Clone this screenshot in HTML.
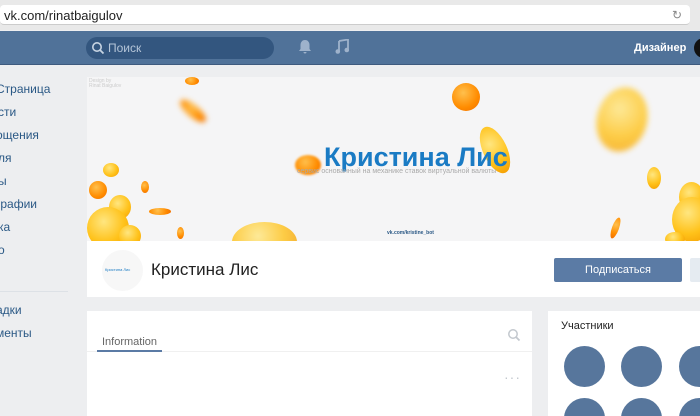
<!DOCTYPE html>
<html style="width:700px;height:416px;overflow:hidden"><head><meta charset="utf-8"><style>
*{margin:0;padding:0;box-sizing:border-box}
body{width:700px;height:416px;overflow:hidden;background:#edeef0;font-family:"Liberation Sans","Noto Sans CJK SC",sans-serif;position:relative}
.a{position:absolute}
.side div{position:absolute;left:-4px;font-size:12px;color:#2a5885}
.coin{position:absolute;border-radius:50%;background:radial-gradient(circle at 40% 35%,#ffe680,#ffc21a 55%,#f39a00)}
.or{background:radial-gradient(circle at 40% 35%,#ffc04d,#ff8c00 60%,#f06d00)}
.bl{filter:blur(3px)}
</style></head><body>
<div class="a" style="left:0;top:0;width:700px;height:30px;background:#e9e9e9"></div>
<div class="a" style="left:0;top:5px;width:690px;height:20px;background:#fff;border-radius:4px;border-bottom:1px solid #ccc"></div>
<div class="a" style="left:4px;top:8px;font-size:13px;color:#222">vk.com/rinatbaigulov</div>
<div class="a" style="left:672px;top:8px;font-size:12px;color:#888">↻</div>
<div class="a" style="left:0;top:31px;width:700px;height:34px;background:#507299;border-bottom:1px solid #3e5a7e"></div>
<div class="a" style="left:86px;top:37px;width:188px;height:22px;background:#33567f;border-radius:11px"></div>
<svg class="a" style="left:91px;top:41px" width="14" height="14"><circle cx="6" cy="6" r="4.2" fill="none" stroke="#c6d3e2" stroke-width="1.6"/><path d="M9 9l3.5 3.5" stroke="#c6d3e2" stroke-width="1.8"/></svg>
<div class="a" style="left:108px;top:41px;font-size:12px;color:#b5c5d8">Поиск</div>
<svg class="a" style="left:298px;top:39px" width="14" height="16"><path d="M7 1c-3 0-4.5 2.5-4.5 5v4L1 12h12l-1.5-2V6C11.5 3.5 10 1 7 1z M5.5 13a1.5 1.5 0 003 0z" fill="#9eb2cb"/></svg>
<svg class="a" style="left:335px;top:39px" width="14" height="16"><path d="M4 2l9-1.5v10" fill="none" stroke="#9eb2cb" stroke-width="1.8"/><path d="M4 2v10" stroke="#9eb2cb" stroke-width="1.8"/><circle cx="2.8" cy="12.5" r="2.3" fill="#9eb2cb"/><circle cx="11.8" cy="11" r="2.3" fill="#9eb2cb"/></svg>
<div class="a" style="left:634px;top:42px;font-size:11px;font-weight:bold;color:#fff">Дизайнер</div>
<div class="a" style="left:694px;top:38px;width:20px;height:20px;border-radius:50%;background:#111"></div>
<div class="side">
<div style="top:82px">Страница</div><div style="top:105px;left:-2px">сти</div><div style="top:128px">ощения</div><div style="top:151px;left:-2px">ля</div><div style="top:174px;left:-2px">ы</div><div style="top:197px">графии</div><div style="top:220px;left:-2px">ка</div><div style="top:243px;left:-2px">о</div>
<div style="top:303px">адки</div><div style="top:326px">менты</div>
</div>
<div class="a" style="left:0;top:291px;width:68px;height:1px;background:#dde1e6"></div>
<div class="a" style="left:87px;top:77px;width:613px;height:220px;background:#fff"></div>
<div class="a" style="left:87px;top:77px;width:613px;height:164px;background:#f5f5f6;overflow:hidden">
<div class="a" style="left:2px;top:2px;font-size:5px;color:#ccc;line-height:5px">Design by<br>Rinat Baigulov</div>
<div class="coin or" style="left:98px;top:0px;width:14px;height:8px"></div>
<div class="coin or bl" style="left:90px;top:28px;width:32px;height:12px;transform:rotate(40deg)"></div>
<div class="coin or" style="left:365px;top:6px;width:28px;height:28px"></div>
<div class="coin bl" style="left:510px;top:10px;width:50px;height:65px;transform:rotate(15deg);opacity:.8"></div>
<div class="coin" style="left:396px;top:48px;width:24px;height:50px;transform:rotate(-25deg)"></div>
<div class="coin or bl" style="left:208px;top:78px;width:26px;height:20px;filter:blur(1px)"></div>
<div class="coin" style="left:16px;top:86px;width:16px;height:14px"></div>
<div class="coin or" style="left:2px;top:104px;width:18px;height:18px"></div>
<div class="coin or" style="left:54px;top:104px;width:8px;height:12px"></div>
<div class="coin" style="left:22px;top:118px;width:22px;height:24px"></div>
<div class="coin or" style="left:62px;top:131px;width:22px;height:7px"></div>
<div class="coin" style="left:0px;top:130px;width:42px;height:42px"></div>
<div class="coin" style="left:32px;top:148px;width:22px;height:22px"></div>
<div class="coin or" style="left:90px;top:150px;width:7px;height:12px"></div>
<div class="coin" style="left:145px;top:145px;width:65px;height:40px;opacity:.8"></div>
<div class="coin" style="left:560px;top:90px;width:14px;height:22px"></div>
<div class="coin" style="left:592px;top:105px;width:25px;height:30px"></div>
<div class="coin" style="left:585px;top:120px;width:40px;height:45px"></div>
<div class="coin or" style="left:525px;top:140px;width:7px;height:22px;transform:rotate(20deg)"></div>
<div class="coin" style="left:578px;top:155px;width:20px;height:14px"></div>
<div class="a" style="left:237px;top:65px;font-size:27px;font-weight:bold;color:#1a7bc4;white-space:nowrap">Кристина Лис</div>
<div class="a" style="left:210px;top:91px;font-size:7px;color:#aaa;white-space:nowrap">сервис основанный на механике ставок виртуальной валюты</div>
<div class="a" style="left:300px;top:153px;font-size:5px;font-weight:bold;color:#2a5885">vk.com/kristine_bot</div>
</div>
<div class="a" style="left:102px;top:250px;width:41px;height:41px;border-radius:50%;background:#f7f7f7"></div>
<div class="a" style="left:105px;top:267px;font-size:4px;color:#1a7bc4">Кристина Лис</div>
<div class="a" style="left:151px;top:260px;font-size:17px;color:#222">Кристина Лис</div>
<div class="a" style="left:554px;top:258px;width:128px;height:24px;background:#5b7ba5;border-radius:2px;color:#fff;font-size:11px;text-align:center;line-height:24px">Подписаться</div>
<div class="a" style="left:690px;top:258px;width:20px;height:24px;background:#e5ebf1;border-radius:2px"></div>
<div class="a" style="left:87px;top:311px;width:445px;height:105px;background:#fff"></div>
<div class="a" style="left:87px;top:351px;width:445px;height:1px;background:#f0f0f0"></div>
<div class="a" style="left:102px;top:336px;font-size:11px;color:#666">Information</div>
<div class="a" style="left:97px;top:350px;width:65px;height:2px;background:#5b7ba5"></div>
<svg class="a" style="left:507px;top:328px" width="14" height="14"><circle cx="6" cy="6" r="4.2" fill="none" stroke="#c3c8ce" stroke-width="1.5"/><path d="M9 9l3.5 3.5" stroke="#c3c8ce" stroke-width="1.8"/></svg>
<div class="a" style="left:504px;top:369px;font-size:14px;color:#c3c8ce;letter-spacing:1px">···</div>
<div class="a" style="left:548px;top:311px;width:152px;height:105px;background:#fff;overflow:hidden">
<div class="a" style="left:13px;top:9px;font-size:11px;color:#222">Участники</div>
<div class="a" style="left:16px;top:35px;width:41px;height:41px;border-radius:50%;background:#57769c"></div>
<div class="a" style="left:73px;top:35px;width:41px;height:41px;border-radius:50%;background:#57769c"></div>
<div class="a" style="left:131px;top:35px;width:41px;height:41px;border-radius:50%;background:#57769c"></div>
<div class="a" style="left:16px;top:87px;width:41px;height:41px;border-radius:50%;background:#57769c"></div>
<div class="a" style="left:73px;top:87px;width:41px;height:41px;border-radius:50%;background:#57769c"></div>
<div class="a" style="left:131px;top:87px;width:41px;height:41px;border-radius:50%;background:#57769c"></div>
</div>
</body></html>
